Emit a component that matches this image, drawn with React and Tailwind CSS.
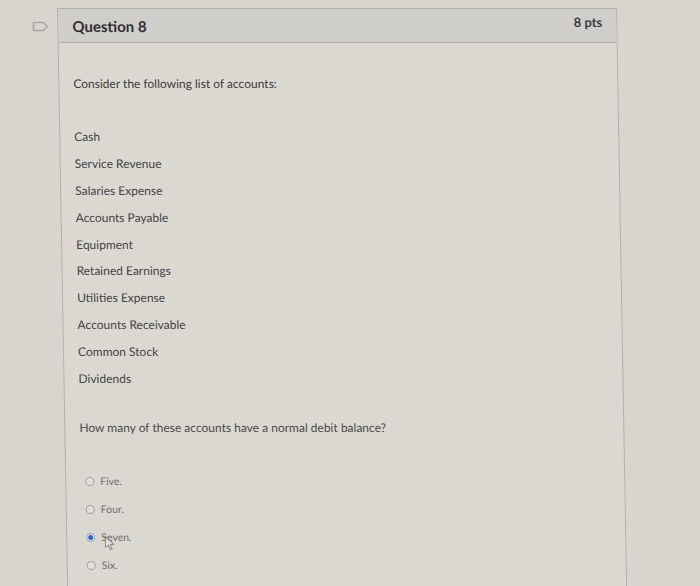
import React from 'react'

const accounts = [
  'Cash',
  'Service Revenue',
  'Salaries Expense',
  'Accounts Payable',
  'Equipment',
  'Retained Earnings',
  'Utilities Expense',
  'Accounts Receivable',
  'Common Stock',
  'Dividends',
]

const options = [
  { label: 'Five.', checked: false },
  { label: 'Four.', checked: false },
  { label: 'Seven.', checked: true },
  { label: 'Six.', checked: false },
]

// little flag marker left of the question
const FlagIcon = () => (
  <svg width="17" height="11" viewBox="0 0 17 11" fill="none">
    <path
      d="M1.5 1.5 H11 L15.5 5.5 L11 9.5 H1.5 Z"
      stroke="#a9a7a3"
      strokeWidth="1.6"
      strokeLinejoin="round"
    />
  </svg>
)

const Cursor = () => (
  <svg width="11" height="16" viewBox="0 0 11 16" className="absolute left-[3px] top-[5px] opacity-70">
    <path
      d="M1 1 L1 12.5 L3.8 10 L5.8 14.6 L7.6 13.8 L5.7 9.4 L9.5 9.4 Z"
      fill="#e6e4e0"
      stroke="#6a6a6a"
      strokeWidth="1"
      strokeLinejoin="round"
    />
  </svg>
)

const Radio = ({ checked }) => (
  <span
    className={
      checked
        ? 'w-[9px] h-[9px] rounded-full border border-[#9ca3b8] bg-[#dfe2ea] flex items-center justify-center shrink-0'
        : 'w-[9px] h-[9px] rounded-full border border-[#a3a19d] bg-[#e2e0dc] shrink-0'
    }
  >
    {checked && <span className="w-[5px] h-[5px] rounded-full bg-[#2a5fc4]" />}
  </span>
)

export default function App() {
  return (
    <div className="w-[700px] h-[586px] overflow-hidden bg-[#d8d5ce] font-['Lato','Noto_Sans',sans-serif] flex">
      {/* left gutter */}
      <div className="w-[57px] shrink-0 flex justify-end pr-[8px] pt-[21px]">
        <FlagIcon />
      </div>

      {/* question card */}
      <div className="w-[560px] mt-[8px] border border-b-0 border-[#b4b1ac] bg-[#dbd8d2] origin-top-left skew-x-[1deg]">
        <div className="h-[34px] bg-[#d0cecb] border-b border-[#b4b1ac] flex justify-between pl-[14px] pr-[14px]">
          <span className="text-[15px] font-bold text-[#2f2f30] leading-[34px]">Question 8</span>
          <span className="text-[13px] font-bold text-[#3a3a3b] leading-[27px]">8 pts</span>
        </div>

        <div className="pl-[14px] pt-[33px]">
          <p className="text-[12px] leading-[16px] text-[#3b3b3c]">Consider the following list of accounts:</p>

          <ul className="mt-[32px]">
            {accounts.map((a) => (
              <li key={a} className="h-[26.8px] flex items-center text-[12px] text-[#444446]">
                {a}
              </li>
            ))}
          </ul>

          <p className="mt-[28px] text-[12px] leading-[16px] text-[#4a4a4c]">
            How many of these accounts have a normal debit balance?
          </p>

          <div className="mt-[32px] pl-[5px]">
            {options.map((o) => (
              <div key={o.label} className="h-[28px] flex items-center gap-[6px]">
                <Radio checked={o.checked} />
                <span className="relative text-[10.5px] text-[#6e6e70]">
                  {o.label}
                  {o.checked && <Cursor />}
                </span>
              </div>
            ))}
          </div>
        </div>
      </div>
    </div>
  )
}
